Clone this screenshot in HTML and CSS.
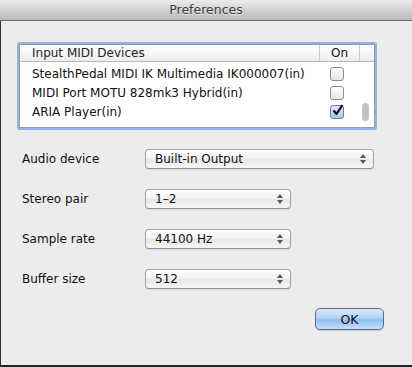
FILE: index.html
```html
<!DOCTYPE html>
<html lang="en">
<head>
    <meta charset="UTF-8">
    <meta name="viewport" content="width=device-width, initial-scale=1.0">
    <title>Preferences</title>
    <link rel="stylesheet" href="styles.css">
</head>
<body>
    <div class="window">
        <div class="titlebar">Preferences</div>

        <div class="content">
            <div class="devices">
                <div class="dev-head">
                    <span class="col-name">Input MIDI Devices</span>
                    <span class="col-on">On</span>
                    <span class="col-corner"></span>
                </div>
                <div class="dev-body">
                    <div class="dev-row">
                        <span class="col-name"></span>
                        <span class="col-on"><span class="check"></span></span>
                    </div>
                    <div class="dev-row">
                        <span class="col-name">StealthPedal MIDI IK Multimedia IK000007(in)</span>
                        <span class="col-on"><span class="check"></span></span>
                    </div>
                    <div class="dev-row">
                        <span class="col-name">MIDI Port MOTU 828mk3 Hybrid(in)</span>
                        <span class="col-on"><span class="check"></span></span>
                    </div>
                    <div class="dev-row">
                        <span class="col-name">ARIA Player(in)</span>
                        <span class="col-on">
                            <span class="check checked">
                                <svg width="13" height="13" viewBox="0 0 13 13">
                                    <path d="M2.5 6.5 L5.5 10 L11.5 1" fill="none" stroke="#111" stroke-width="2.2" stroke-linejoin="round"/>
                                </svg>
                            </span>
                        </span>
                    </div>
                    <div class="scroll-thumb"></div>
                </div>
            </div>

            <div class="field">
                <label>Audio device</label>
                <div class="popup wide">
                    <span>Built-in Output</span>
                    <svg class="arrows" width="6" height="10" viewBox="0 0 6 10"><path d="M3 0 L6 4 L0 4 Z M0 6 L6 6 L3 10 Z" fill="#555"/></svg>
                </div>
            </div>

            <div class="field">
                <label>Stereo pair</label>
                <div class="popup">
                    <span>1–2</span>
                    <svg class="arrows" width="6" height="10" viewBox="0 0 6 10"><path d="M3 0 L6 4 L0 4 Z M0 6 L6 6 L3 10 Z" fill="#555"/></svg>
                </div>
            </div>

            <div class="field">
                <label>Sample rate</label>
                <div class="popup">
                    <span>44100 Hz</span>
                    <svg class="arrows" width="6" height="10" viewBox="0 0 6 10"><path d="M3 0 L6 4 L0 4 Z M0 6 L6 6 L3 10 Z" fill="#555"/></svg>
                </div>
            </div>

            <div class="field">
                <label>Buffer size</label>
                <div class="popup">
                    <span>512</span>
                    <svg class="arrows" width="6" height="10" viewBox="0 0 6 10"><path d="M3 0 L6 4 L0 4 Z M0 6 L6 6 L3 10 Z" fill="#555"/></svg>
                </div>
            </div>

            <div class="actions">
                <button class="ok-button">OK</button>
            </div>
        </div>
    </div>
</body>
</html>
```

FILE: styles.css
```css
html, body {
    margin: 0;
    padding: 0;
}

body {
    width: 412px;
    height: 367px;
    overflow: hidden;
    font-family: "DejaVu Sans", "Liberation Sans", sans-serif;
    font-size: 12px;
    color: #111;
    background: #1f2327;
}

.window {
    height: 365px;
    background: #ececec;
    display: flex;
    flex-direction: column;
}

.titlebar {
    height: 20px;
    line-height: 20px;
    text-align: center;
    font-size: 12.5px;
    color: #3a3a3a;
    text-shadow: 0 1px 0 rgba(255, 255, 255, 0.6);
    background: linear-gradient(to bottom, #ececec, #d2d2d2 50%, #bababa);
    border-bottom: 1px solid #6e6e6e;
}

.content {
    flex: 1;
    padding: 23px 0 0 18px;
    border-left: 1px solid #2a2d31;
}

/* device list */

.devices {
    width: 354px;
    height: 82px;
    background: #fff;
    border: 1px solid #9a9a9a;
    box-shadow: 0 0 0 2px rgba(110, 160, 230, 0.75);
    border-radius: 1px;
    display: flex;
    flex-direction: column;
    overflow: hidden;
}

.dev-head {
    height: 16px;
    display: flex;
    align-items: center;
    background: linear-gradient(to bottom, #ffffff, #ededed);
    border-bottom: 1px solid #b9b9b9;
}

.dev-head .col-name {
    color: #222;
}

.col-name {
    flex: 0 0 299px;
    padding-left: 12px;
    box-sizing: border-box;
    white-space: nowrap;
    overflow: hidden;
}

.col-on {
    flex: 0 0 40px;
    text-align: center;
    display: flex;
    justify-content: center;
    align-items: center;
}

.dev-head .col-on,
.dev-head .col-corner {
    border-left: 1px solid #c8c8c8;
    height: 100%;
    box-sizing: border-box;
}

.col-corner {
    flex: 1;
}

.dev-body {
    flex: 1;
    position: relative;
    overflow: hidden;
}

.dev-row {
    height: 19px;
    display: flex;
    align-items: center;
}

.dev-row:first-child {
    margin-top: -17px;
}

.check {
    width: 12px;
    height: 12px;
    border: 1px solid #8e8e8e;
    border-radius: 3px;
    background: linear-gradient(to bottom, #ffffff, #e6e6e6);
    margin-right: 4px;
    position: relative;
}

.check.checked {
    background: linear-gradient(to bottom, #dce8f8, #a9c5ea);
    border-color: #6f7f9a;
}

.check svg {
    position: absolute;
    left: 0;
    top: -2px;
}

.scroll-thumb {
    position: absolute;
    right: 5px;
    top: 41px;
    width: 7px;
    height: 18px;
    border-radius: 4px;
    background: #c2c2c2;
}

/* popup fields */

.field {
    display: flex;
    align-items: center;
    height: 20px;
    margin-top: 20px;
    padding-left: 3px;
}

.devices + .field {
    margin-top: 21px;
}

.field label {
    width: 123px;
}

.popup {
    box-sizing: border-box;
    width: 146px;
    height: 20px;
    border: 1px solid #a3a3a3;
    border-bottom-color: #8e8e8e;
    border-radius: 4px;
    background: linear-gradient(to bottom, #ffffff, #f1f1f1 50%, #e7e7e7 51%, #f6f6f6);
    box-shadow: 0 1px 1px rgba(0, 0, 0, 0.08);
    display: flex;
    align-items: center;
    justify-content: space-between;
    padding: 0 7px 0 9px;
}

.popup.wide {
    width: 229px;
}

.arrows {
    display: block;
}

/* buttons */

.actions {
    display: flex;
    justify-content: flex-end;
    padding-right: 28px;
    margin-top: 19px;
}

.ok-button {
    width: 69px;
    height: 22px;
    font-family: "DejaVu Sans", "Liberation Sans", sans-serif;
    font-size: 12.5px;
    color: #111;
    border: 1px solid #5d6b95;
    border-radius: 5px;
    background: linear-gradient(to bottom, #dbe9fb, #b4d3f6 45%, #92bdef 55%, #c5e0fb);
    box-shadow: 0 1px 1px rgba(0, 0, 0, 0.15);
    padding: 0;
}
```
